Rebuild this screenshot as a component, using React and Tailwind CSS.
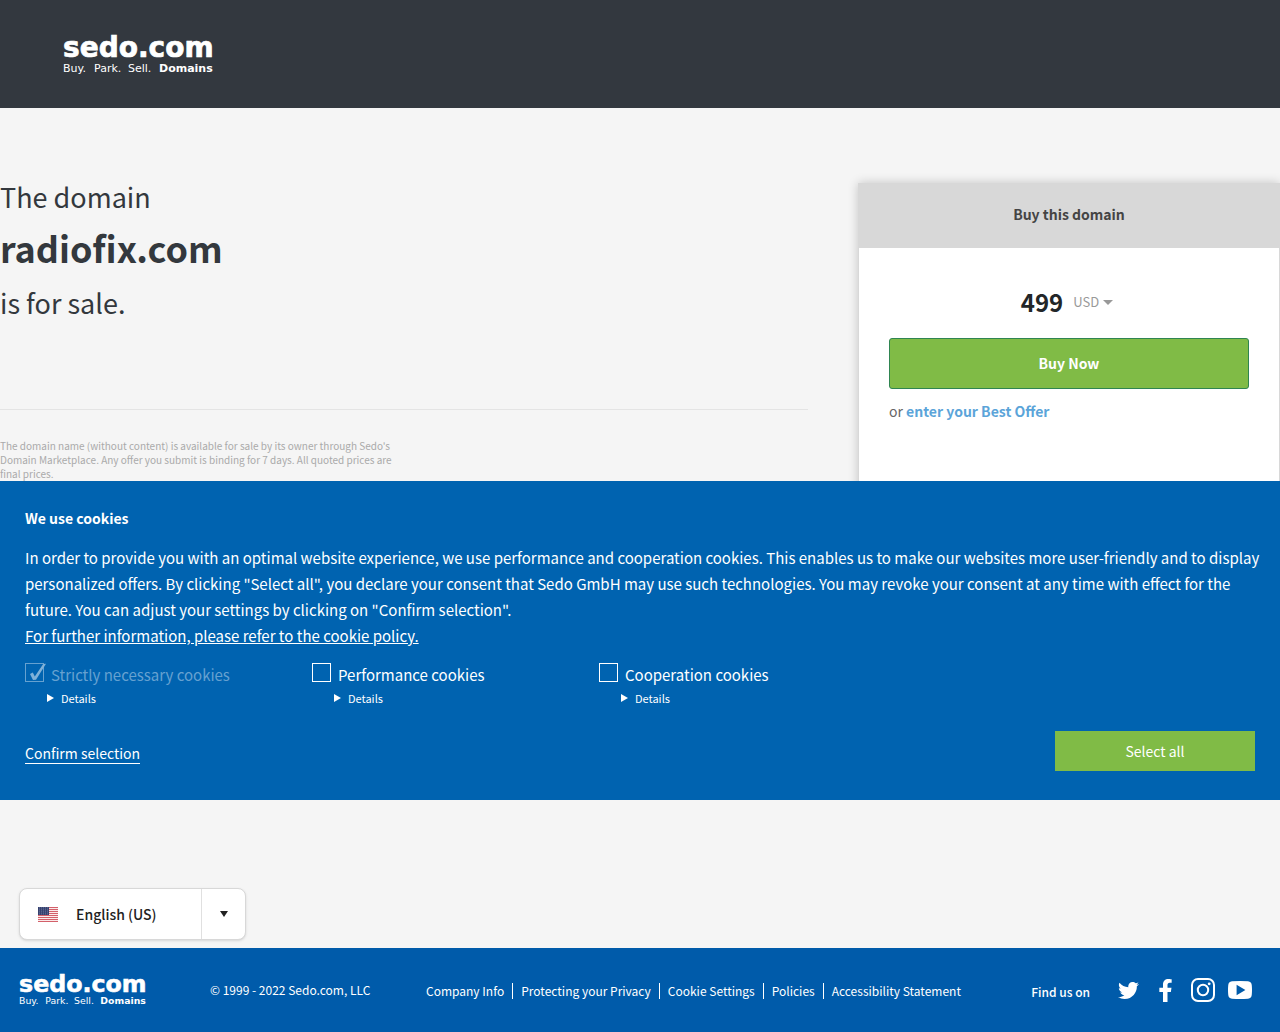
import React, { useState } from "react";
import { FaFacebookF, FaTwitter } from "react-icons/fa";

const footerLinks = [
  "Company Info",
  "Protecting your Privacy",
  "Cookie Settings",
  "Policies",
  "Accessibility Statement",
];

const InstagramIcon = ({ size }) => (
  <svg viewBox="0 0 24 24" width={size} height={size} fill="none" stroke="currentColor">
    <rect x="1" y="1" width="22" height="22" rx="6" strokeWidth="2" />
    <circle cx="12" cy="12" r="5.2" strokeWidth="2" />
    <circle cx="18.2" cy="5.8" r="1.4" fill="currentColor" stroke="none" />
  </svg>
);

const YoutubeIcon = ({ size }) => (
  <svg viewBox="0 0 24 24" width={size} height={size} fill="currentColor">
    <path
      fillRule="evenodd"
      d="M4 3.3Q12 2.7 20 3.3Q23.6 3.6 23.8 7.5Q24.2 12 23.8 16.5Q23.6 20.4 20 20.7Q12 21.3 4 20.7Q.4 20.4 .2 16.5Q-.2 12 .2 7.5Q.4 3.6 4 3.3ZM8.6 6.8V17.2L17.4 12Z"
    />
  </svg>
);

const socials = [
  { name: "Twitter", Icon: FaTwitter, size: 21 },
  { name: "Facebook", Icon: FaFacebookF, size: 23 },
  { name: "Instagram", Icon: InstagramIcon, size: 24 },
  { name: "YouTube", Icon: YoutubeIcon, size: 24 },
];

const Logo = ({ className }) => (
  <svg
    viewBox="0 0 151 42"
    className={className}
    fill="#fff"
    fontFamily="'DejaVu Sans', sans-serif"
    role="img"
    aria-label="sedo.com"
  >
    <text x="0" y="23" fontSize="28" fontWeight="700" stroke="#fff" strokeWidth="0.7">
      sedo.com
    </text>
    <g fontSize="11">
      <text x="0" y="38">Buy.</text>
      <text x="31" y="38">Park.</text>
      <text x="65" y="38">Sell.</text>
    </g>
    <text x="96" y="38" fontSize="11" fontWeight="700">
      Domains
    </text>
  </svg>
);

const Flag = () => (
  <svg viewBox="0 0 20 15" className="h-[15px] w-5" aria-hidden="true">
    <rect width="20" height="15" fill="#fbeaea" />
    {[0, 2, 4, 6, 8, 10, 12, 14].map((y) => (
      <rect key={y} y={y} width="20" height="1" fill="#d3606a" />
    ))}
    <rect width="11" height="8" fill="#35416f" />
    {[1, 3, 5, 7].map((y) =>
      [1, 3, 5, 7, 9].map((x) => (
        <rect key={`${x}-${y}`} x={x} y={y - 0.5} width="0.8" height="0.8" fill="#8d97b8" />
      ))
    )}
  </svg>
);

const CookieOption = ({ id, label, checked, disabled, onChange }) => (
  <div className="w-[287px]">
    <div className="flex h-6 items-start">
      <span className="relative block size-[19px]">
        <input
          id={id}
          type="checkbox"
          checked={checked}
          disabled={disabled}
          onChange={onChange}
          className="block size-[19px] appearance-none border border-white disabled:border-[#66a1d0]"
        />
        {checked && (
          <svg
            viewBox="0 0 19 19"
            className={`pointer-events-none absolute left-px top-0 size-[19px] overflow-visible ${
              disabled ? "text-[#7fb1d8]" : "text-white"
            }`}
            fill="currentColor"
          >
            <path d="M4 11 6.8 9.6 8.8 13.4 17.2 1 20 .8 10 16.8 7 17Z" />
          </svg>
        )}
      </span>
      <label
        htmlFor={id}
        className={`ml-[7px] text-[15px] leading-6 ${disabled ? "text-[#66a1d0]" : "text-white"}`}
      >
        {label}
      </label>
    </div>
    <button type="button" className="ml-[22px] flex items-center text-[11px] leading-[22px] text-white">
      <svg viewBox="0 0 7 8" className="mr-[7px] h-2 w-[7px]" fill="currentColor">
        <path d="M0 0 7 4 0 8Z" />
      </svg>
      Details
    </button>
  </div>
);

const CookieBanner = () => {
  const [performance, setPerformance] = useState(false);
  const [cooperation, setCooperation] = useState(false);

  const selectAll = () => {
    setPerformance(true);
    setCooperation(true);
  };

  return (
    <section className="absolute inset-x-0 top-[481px] bg-[#0063b0] px-[25px] pb-[29px] pt-6 text-white">
      <h2 className="text-sm font-bold leading-[26px]">We use cookies</h2>
      <p className="-mr-4 mt-[14px] text-[15px] leading-[26px]">
        In order to provide you with an optimal website experience, we use performance and
        cooperation cookies. This enables us to make our websites more user-friendly and to display
        personalized offers. By clicking "Select all", you declare your consent that Sedo GmbH may
        use such technologies. You may revoke your consent at any time with effect for the future.
        You can adjust your settings by clicking on "Confirm selection".
        <br />
        <a href="#policy" className="underline">
          For further information, please refer to the cookie policy.
        </a>
      </p>
      <div className="mt-[14px] flex flex-wrap">
        <CookieOption id="necessary" label="Strictly necessary cookies" checked disabled />
        <CookieOption
          id="performance"
          label="Performance cookies"
          checked={performance}
          onChange={() => setPerformance(!performance)}
        />
        <CookieOption
          id="cooperation"
          label="Cooperation cookies"
          checked={cooperation}
          onChange={() => setCooperation(!cooperation)}
        />
      </div>
      <div className="mt-[22px] flex items-center justify-between">
        <button type="button" className="mt-1 border-b border-white text-sm leading-5">
          Confirm selection
        </button>
        <button type="button" onClick={selectAll} className="h-10 w-[200px] bg-[#80bb46] text-sm">
          Select all
        </button>
      </div>
    </section>
  );
};

const BuyBox = () => (
  <aside className="h-[400px] w-[422px] shrink-0 border border-[#d8d8d8] bg-white shadow-[0_0_10px_rgba(0,0,0,0.2)]">
    <h2 className="bg-[#d8d8d8] pb-1 text-center text-sm font-bold leading-[60px] text-[#444]">
      Buy this domain
    </h2>
    <div className="px-[30px] pt-[38px]">
      <div className="flex items-center justify-center leading-8">
        <span className="text-2xl font-bold leading-8 text-[#222628]">499</span>
        <button type="button" className="ml-[10px] mr-1 flex items-center text-[13px] text-[#999]">
          USD
          <svg viewBox="0 0 10 5" className="ml-1 h-[5px] w-[10px]" fill="currentColor">
            <path d="M0 0H10L5 5Z" />
          </svg>
        </button>
      </div>
      <button
        type="button"
        className="mt-5 h-[51px] w-full rounded-[3px] border border-[#2f8551] bg-[#80bb46] pb-[2px] text-sm font-bold text-white"
      >
        Buy Now
      </button>
      <p className="mt-3 text-sm leading-5 text-[#666]">
        or{" "}
        <a href="#offer" className="font-bold text-[#5ba4d9]">
          enter your Best Offer
        </a>
      </p>
    </div>
  </aside>
);

const App = () => {
  return (
    <div className="relative flex min-h-screen flex-col bg-[#f5f5f5] font-['Noto_Sans_CJK_SC',sans-serif] text-[#33383d]">
      <header className="flex h-[108px] items-start bg-[#33383f] px-[63px] pt-[34px]">
        <Logo className="w-[151px] overflow-visible" />
      </header>

      <main className="flex items-start justify-between pt-[74px]">
        <div className="mr-[50px] grow">
          <h1 className="text-[27px] leading-[30px]">
            The domain
            <span className="mb-[10px] mt-1 block text-[36px] font-bold leading-[62px]">
              radiofix.com
            </span>
            is for sale.
          </h1>
          <hr className="mt-[91px] border-[#e4e4e4]" />
          <p className="mt-[29px] w-[400px] text-[10px] leading-[14px] text-[#aaa]">
            The domain name (without content) is available for sale by its owner through Sedo's
            Domain Marketplace. Any offer you submit is binding for 7 days. All quoted prices are
            final prices.
          </p>
        </div>
        <div className="pt-px">
          <BuyBox />
        </div>
      </main>

      <button
        type="button"
        className="mb-2 ml-[19px] mt-auto flex h-[52px] w-[227px] items-center rounded-lg border border-[#d8d8d8] bg-white text-sm font-medium text-[#222] shadow-sm"
      >
        <span className="flex grow items-center gap-[18px] pl-[18px]">
          <Flag />
          English (US)
        </span>
        <span className="flex w-11 items-center justify-center self-stretch border-l border-[#e0e0e0]">
          <svg viewBox="0 0 8 6" className="h-[6px] w-2" fill="currentColor">
            <path d="M0 0H8L4 6Z" />
          </svg>
        </span>
      </button>

      <footer className="flex h-[84px] items-center bg-[#005baa] pl-[19px] pr-[22px] text-xs text-white">
        <Logo className="w-32 overflow-visible" />
        <p className="ml-[63px] w-[216px]">© 1999 - 2022 Sedo.com, LLC</p>
        <nav className="flex divide-x divide-white pt-[2px]">
          {footerLinks.map((item) => (
            <a key={item} href="#footer" className="px-2 leading-4 first:pl-0">
              {item}
            </a>
          ))}
        </nav>
        <p className="ml-auto pt-1 font-medium">Find us on</p>
        <div className="ml-5 flex items-center">
          {socials.map(({ name, Icon, size }) => (
            <a key={name} href="#social" aria-label={name} className="flex w-[37px] justify-center">
              <Icon size={size} />
            </a>
          ))}
        </div>
      </footer>

      <CookieBanner />
    </div>
  );
};

export default App;
